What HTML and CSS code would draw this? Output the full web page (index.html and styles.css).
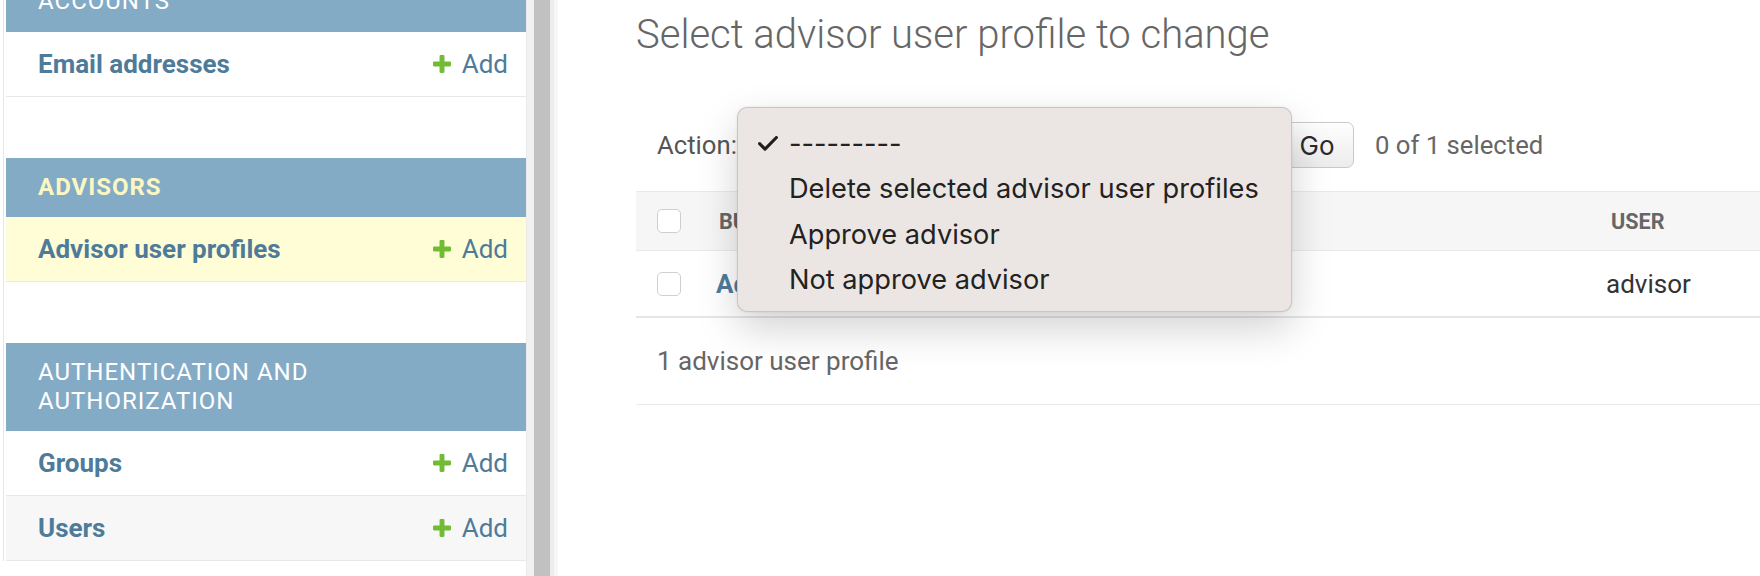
FILE: index.html
```html
<!DOCTYPE html>
<html lang="en">
<head>
<meta charset="utf-8">
<title>Select advisor user profile to change</title>
<link rel="stylesheet" href="styles.css">
</head>
<body>
<div class="page">
  <nav class="sidebar">
    <div class="sidebar-inner">
      <section class="module module-first">
        <div class="caption"><span class="caption-text">Accounts</span></div>
        <div class="row">
          <a class="model">Email addresses</a>
          <a class="add"><svg viewBox="192 192 1408 1408"><path fill="#72bb34" d="M1600 796v192q0 40-28 68t-68 28h-416v416q0 40-28 68t-68 28h-192q-40 0-68-28t-28-68v-416h-416q-40 0-68-28t-28-68v-192q0-40 28-68t68-28h416v-416q0-40 28-68t68-28h192q40 0 68 28t28 68v416h416q40 0 68 28t28 68z"/></svg>Add</a>
        </div>
      </section>
      <section class="module">
        <div class="caption current"><span class="caption-text">Advisors</span></div>
        <div class="row selected">
          <a class="model">Advisor user profiles</a>
          <a class="add"><svg viewBox="192 192 1408 1408"><path fill="#72bb34" d="M1600 796v192q0 40-28 68t-68 28h-416v416q0 40-28 68t-68 28h-192q-40 0-68-28t-28-68v-416h-416q-40 0-68-28t-28-68v-192q0-40 28-68t68-28h416v-416q0-40 28-68t68-28h192q40 0 68 28t28 68v416h416q40 0 68 28t28 68z"/></svg>Add</a>
        </div>
      </section>
      <section class="module">
        <div class="caption"><span class="caption-text">Authentication and Authorization</span></div>
        <div class="row">
          <a class="model">Groups</a>
          <a class="add"><svg viewBox="192 192 1408 1408"><path fill="#72bb34" d="M1600 796v192q0 40-28 68t-68 28h-416v416q0 40-28 68t-68 28h-192q-40 0-68-28t-28-68v-416h-416q-40 0-68-28t-28-68v-192q0-40 28-68t68-28h416v-416q0-40 28-68t68-28h192q40 0 68 28t28 68v416h416q40 0 68 28t28 68z"/></svg>Add</a>
        </div>
        <div class="row alt">
          <a class="model">Users</a>
          <a class="add"><svg viewBox="192 192 1408 1408"><path fill="#72bb34" d="M1600 796v192q0 40-28 68t-68 28h-416v416q0 40-28 68t-68 28h-192q-40 0-68-28t-28-68v-416h-416q-40 0-68-28t-28-68v-192q0-40 28-68t68-28h416v-416q0-40 28-68t68-28h192q40 0 68 28t28 68v416h416q40 0 68 28t28 68z"/></svg>Add</a>
        </div>
      </section>
    </div>
  </nav>

  <div class="divider"><span class="d0"></span><span class="d1"></span><span class="thumb"></span><span class="d2"></span><span class="d3"></span></div>

  <main class="content">
    <h1>Select advisor user profile to change</h1>
    <div class="actions">
      <span class="label">Action:</span>
      <span class="select"></span>
      <button class="go">Go</button>
      <span class="counter">0 of 1 selected</span>
    </div>
    <div class="results">
      <div class="thead">
        <div class="cell"><span class="cb"></span></div>
        <div class="cell th name-h">Business name</div>
        <div class="cell th user-h">User</div>
      </div>
      <div class="trow">
        <div class="cell"><span class="cb"></span></div>
        <div class="cell"><a class="link">Advisor Group LLC</a></div>
        <div class="cell user-c">advisor</div>
      </div>
    </div>
    <p class="paginator">1 advisor user profile</p>
  </main>

  <div class="popup">
    <div class="item"><svg class="check" viewBox="0 0 20 15"><path d="M1.6 7.6 L7 13.2 L18.4 1.5" fill="none" stroke="#1e1e1e" stroke-width="3.1" stroke-linecap="round" stroke-linejoin="round"/></svg>---------</div>
    <div class="item">Delete selected advisor user profiles</div>
    <div class="item">Approve advisor</div>
    <div class="item">Not approve advisor</div>
  </div>
</div>
</body>
</html>
```

FILE: styles.css
```css
* { box-sizing: border-box; margin: 0; padding: 0; }

html, body { height: 100%; }

body {
  font-family: Roboto, "Liberation Sans", sans-serif;
  background: #fff;
  overflow: hidden;
}

.page {
  display: flex;
  height: 576px;
  position: relative;
  overflow: hidden;
}

/* ---------- sidebar ---------- */
.sidebar {
  width: 526px;
  flex: none;
  padding-left: 3px;
}

.sidebar-inner {
  border-left: 1px solid #e6e6e6;
  padding-left: 2px;
  min-height: 100%;
}

.module { margin-bottom: 61px; }
.module-first { margin-top: -28px; }

.caption {
  background: #84abc6;
  color: #fff;
  font-size: 24px;
  letter-spacing: 1px;
  text-transform: uppercase;
  line-height: 28.5px;
  padding: 15px 18px 16px 32px;
}

.caption.current {
  color: #fbf7c3;
  font-weight: 700;
}

.caption-text {
  display: block;
  max-width: 330px;
}

.row {
  display: flex;
  align-items: center;
  justify-content: space-between;
  height: 65px;
  padding: 0 18px 0 32px;
  border-bottom: 1px solid #e8e8e8;
  font-size: 26px;
}

.row.selected { background: #fefdd6; }
.row.alt { background: #f7f7f7; }

.model {
  color: #4e7b9a;
  font-weight: 700;
}

.add {
  color: #4e7b9a;
  display: flex;
  align-items: center;
  gap: 11px;
}

.add svg {
  width: 18px;
  height: 18px;
}

/* ---------- divider / scrollbar ---------- */
.divider {
  flex: none;
  display: flex;
  width: 32px;
}
.d0 { width: 1px; background: #ebebeb; }
.d1 { width: 7px; background: #f1f1f1; }
.thumb { width: 16px; background: #c1c1c1; }
.d2 { width: 4px; background: #ececec; }
.d3 { width: 4px; background: #f7f7f7; }

/* ---------- content ---------- */
.content {
  flex: none;
  width: 1202px;
  padding-left: 78px;
}

h1 {
  font-weight: 300;
  font-size: 40px;
  line-height: 46px;
  color: #666;
  margin-top: 12px;
  white-space: nowrap;
}

.actions {
  display: flex;
  align-items: center;
  height: 46px;
  margin-top: 64px;
  padding-left: 21px;
  font-size: 25.7px;
}

.label {
  color: #555;
  width: 88px;
  flex: none;
}

.select {
  width: 527px;
  height: 46px;
  flex: none;
}

.go {
  width: 74px;
  height: 46px;
  margin-left: 8px;
  border: 1px solid #c9c9c9;
  border-radius: 7px;
  background: linear-gradient(#fefefe, #ececec);
  font-family: Inter, "Noto Sans", sans-serif;
  font-size: 26px;
  color: #2b2b2b;
  flex: none;
}

.counter {
  color: #666;
  margin-left: 21px;
}

.results {
  margin-top: 23px;
  border-top: 1px solid #eaeaea;
}

.thead, .trow {
  display: grid;
  grid-template-columns: 80px 877px 1fr;
  align-items: center;
}

.thead {
  height: 59px;
  background: #f6f6f6;
  border-bottom: 1px solid #eaeaea;
}

.trow {
  height: 67px;
  border-bottom: 2px solid #e6e6e6;
  font-size: 26px;
}

.cell {
  display: flex;
  align-items: center;
  white-space: nowrap;
  overflow: hidden;
}

.cb {
  width: 24px;
  height: 24px;
  border: 1px solid #cfcfcf;
  border-radius: 5px;
  background: #fff;
  margin-left: 21px;
}

.th {
  font-size: 21.6px;
  font-weight: 700;
  color: #666;
  text-transform: uppercase;
}

.name-h { padding-left: 3px; }
.user-h { padding-left: 18px; }
.user-c { padding-left: 13px; color: #333; }

.link {
  color: #4e7b9a;
  font-weight: 700;
}

.paginator {
  height: 87px;
  padding-left: 21px;
  display: flex;
  align-items: center;
  font-size: 26px;
  color: #666;
  border-bottom: 1px solid #eaeaea;
}

/* ---------- native select menu ---------- */
.popup {
  position: absolute;
  left: 737px;
  top: 107px;
  width: 555px;
  height: 205px;
  background: #ebe6e3;
  border: 1px solid rgba(0, 0, 0, 0.14);
  border-radius: 10px;
  box-shadow: 0 16px 40px rgba(0, 0, 0, 0.18), 0 0 3px rgba(0, 0, 0, 0.08);
  padding-top: 13px;
  font-family: Inter, "Noto Sans", sans-serif;
  font-size: 27.2px;
  color: #222;
}

.item {
  position: relative;
  height: 45.3px;
  display: flex;
  align-items: center;
  padding-left: 51px;
  white-space: nowrap;
}

.check {
  position: absolute;
  left: 20px;
  top: 15px;
  width: 20px;
  height: 15px;
}
```
